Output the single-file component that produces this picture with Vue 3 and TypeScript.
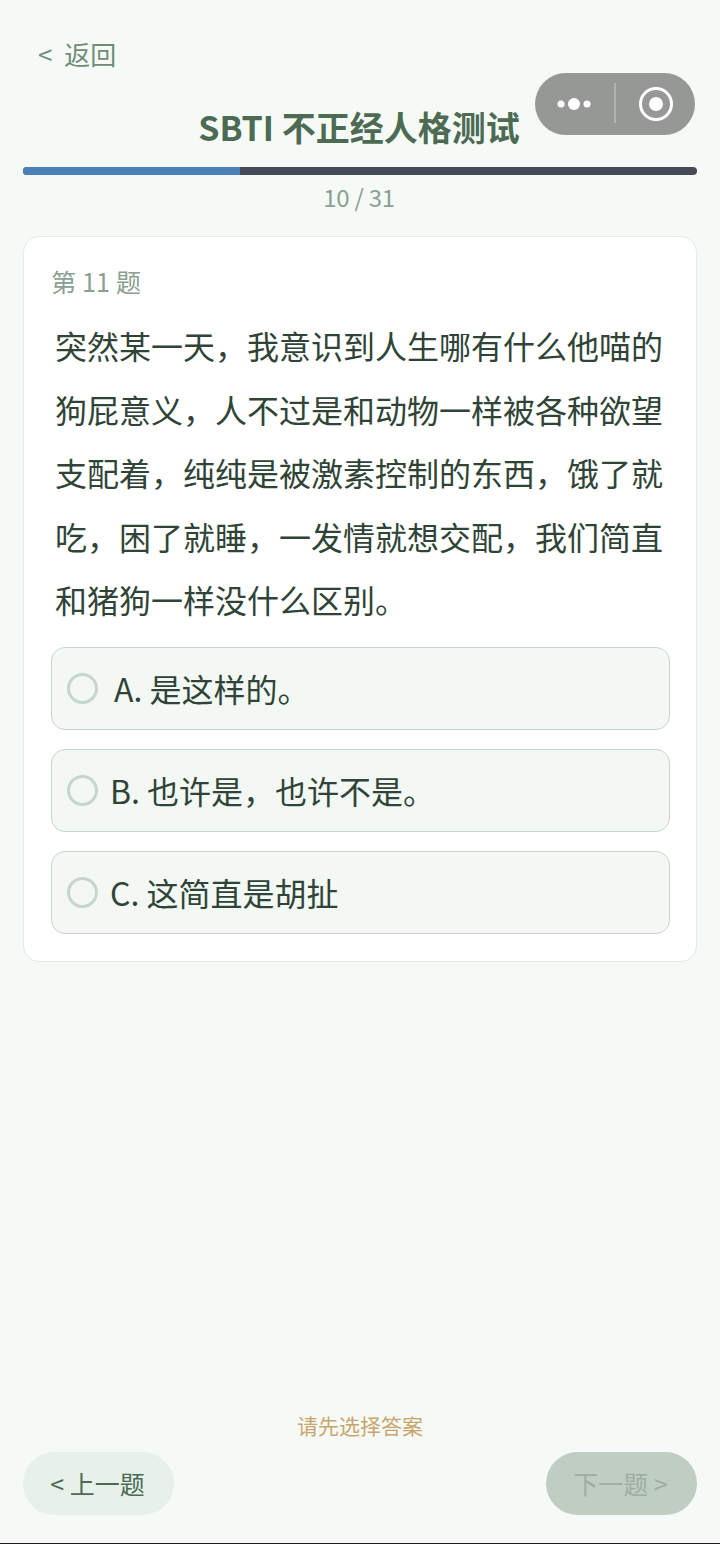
<script setup lang="ts">
const options: string[] = ['A. 是这样的。', 'B. 也许是，也许不是。', 'C. 这简直是胡扯']
const current = 10
const total = 31
const percent = (current / total) * 100
</script>

<template>
  <div class="page">
    <button class="back">&lt; 返回</button>
    <h1 class="title">SBTI 不正经人格测试</h1>
    <div class="capsule">
      <svg class="dots" width="36" height="14" viewBox="0 0 36 14">
        <circle cx="5" cy="7" r="3.5" fill="#fff" />
        <circle cx="18" cy="7" r="6" fill="#fff" />
        <circle cx="31" cy="7" r="3.5" fill="#fff" />
      </svg>
      <span class="divider"></span>
      <svg class="target" width="36" height="36" viewBox="0 0 36 36">
        <circle cx="18" cy="18" r="15.5" fill="none" stroke="#fff" stroke-width="3" />
        <circle cx="18" cy="18" r="7" fill="#fff" />
      </svg>
    </div>
    <div class="track"><div class="fill" :style="{ width: percent + '%' }"></div></div>
    <div class="count">{{ current }} / {{ total }}</div>
    <section class="card">
      <div class="label">第 11 题</div>
      <p class="question">突然某一天，我意识到人生哪有什么他喵的狗屁意义，人不过是和动物一样被各种欲望支配着，纯纯是被激素控制的东西，饿了就吃，困了就睡，一发情就想交配，我们简直和猪狗一样没什么区别。</p>
      <div class="options">
        <div v-for="o in options" :key="o" class="option">
          <span class="radio"></span>
          <span class="option-text">{{ o }}</span>
        </div>
      </div>
    </section>
    <div class="footer">
      <div class="hint">请先选择答案</div>
      <div class="nav">
        <button class="nav-btn prev">&lt; 上一题</button>
        <button class="nav-btn next">下一题 &gt;</button>
      </div>
    </div>
  </div>
</template>

<style scoped>
.page {
  position: relative;
  box-sizing: border-box;
  width: 720px;
  height: 1544px;
  padding: 0 23px;
  display: flex;
  flex-direction: column;
  background: #f6faf7;
  border-bottom: 1px solid #1c1c1c;
  font-family: "Noto Sans CJK SC", "Noto Sans", sans-serif;
}
button {
  font-family: inherit;
  border: 0;
  padding: 0;
  background: none;
}
.back {
  align-self: flex-start;
  margin: 35px 0 0 15px;
  height: 38px;
  line-height: 38px;
  font-size: 26px;
  color: #6f8d77;
  word-spacing: 6px;
}
.title {
  margin: 32px 0 0 -2px;
  height: 44px;
  line-height: 44px;
  text-align: center;
  font-size: 34px;
  font-weight: 700;
  color: #4d6a53;
}
.capsule {
  position: absolute;
  left: 535px;
  top: 73px;
  width: 160px;
  height: 62px;
  border-radius: 31px;
  background: #969896;
}
.dots {
  position: absolute;
  left: 21px;
  top: 24px;
}
.divider {
  position: absolute;
  left: 79px;
  top: 10px;
  width: 2px;
  height: 40px;
  background: #b1b3b1;
}
.target {
  position: absolute;
  left: 103px;
  top: 13px;
}
.track {
  margin-top: 18px;
  height: 8px;
  border-radius: 4px;
  background: #454a56;
  overflow: hidden;
}
.fill {
  height: 100%;
  background: #4a80b5;
}
.count {
  margin: 6px 0 0 -2px;
  height: 32px;
  line-height: 32px;
  text-align: center;
  font-size: 24px;
  letter-spacing: -0.3px;
  color: #8aa090;
}
.card {
  box-sizing: border-box;
  margin-top: 23px;
  height: 726px;
  padding: 25px 27px 0;
  background: #fff;
  border: 1px solid #e3ebe5;
  border-radius: 16px;
}
.label {
  height: 38px;
  line-height: 38px;
  font-size: 25.3px;
  color: #8aa090;
}
.question {
  margin: 14px 0 0 4px;
  width: 612px;
  font-size: 32px;
  line-height: 63.6px;
  color: #2f4436;
}
.options {
  margin-top: 15px;
  display: flex;
  flex-direction: column;
  gap: 19px;
}
.option {
  box-sizing: border-box;
  width: 619px;
  height: 83px;
  display: flex;
  align-items: center;
  gap: 12px;
  padding-left: 15px;
  background: #f3f8f4;
  border: 1px solid #c7d6cb;
  border-radius: 14px;
}
.option:first-child {
  gap: 16px;
}
.radio {
  box-sizing: border-box;
  width: 31px;
  height: 31px;
  border-radius: 50%;
  border: 3px solid #c7d6cb;
  background: #f3f8f4;
}
.option-text {
  font-size: 32px;
  line-height: 44px;
  color: #2f4436;
}
.footer {
  margin-top: auto;
  padding-bottom: 28px;
}
.hint {
  height: 32px;
  line-height: 32px;
  text-align: center;
  font-size: 21px;
  color: #c9a56e;
  position: relative;
  top: -2px;
}
.nav {
  margin-top: 9px;
  display: flex;
  justify-content: space-between;
}
.nav-btn {
  width: 151px;
  height: 63px;
  border-radius: 32px;
  font-size: 25px;
  padding: 0 2px 2px 0;
}
.prev {
  background: #e6f1e9;
  color: #4d6a53;
}
.next {
  background: #bfcdc2;
  color: #9eaea2;
}
</style>

<style>
html, body {
  margin: 0;
  background: #f6faf7;
}
</style>
